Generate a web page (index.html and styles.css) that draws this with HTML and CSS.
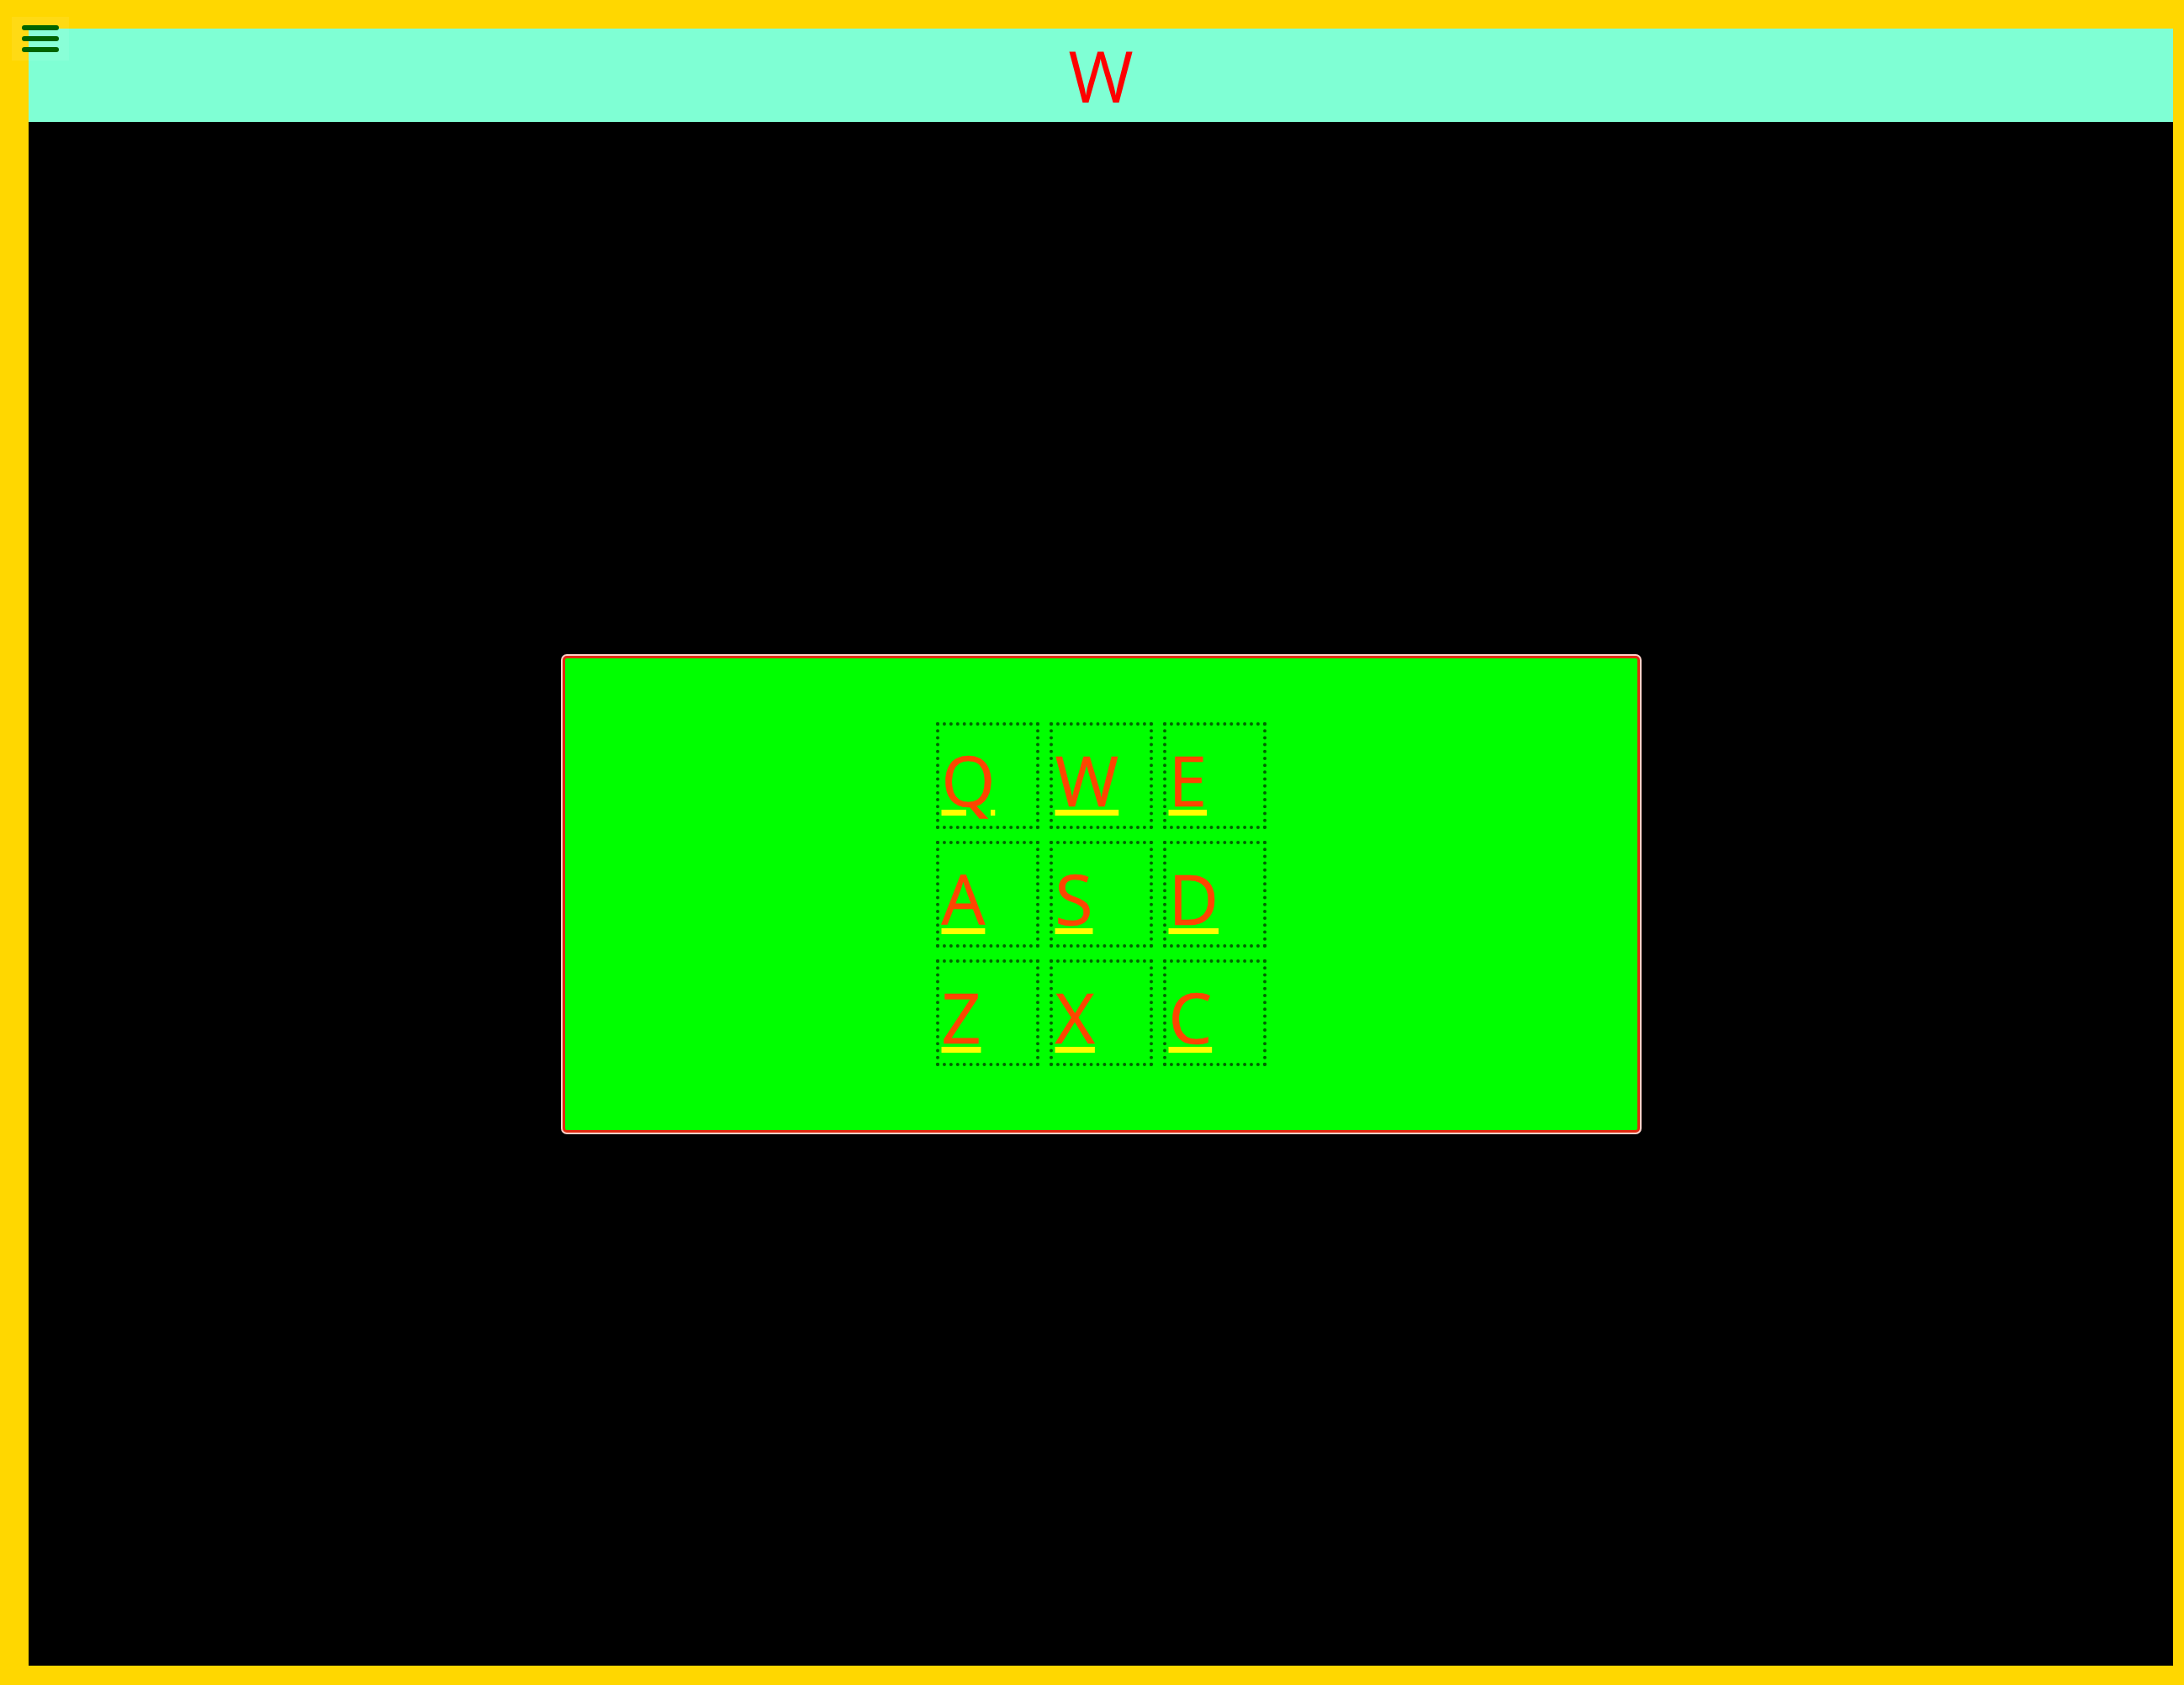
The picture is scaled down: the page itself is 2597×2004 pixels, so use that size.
FILE: index.html
```html
<!DOCTYPE html>
<html>
<head>
<meta charset="utf-8">
<title>W</title>
<link rel="stylesheet" href="styles.css">
</head>
<body>
<div class="page">
  <header class="topbar">
    <h1 class="title">W</h1>
  </header>
  <main class="stage">
    <section class="panel">
      <div class="keys">
        <a class="key" href="#"><span class="key-label">Q</span></a>
        <a class="key" href="#"><span class="key-label">W</span></a>
        <a class="key" href="#"><span class="key-label">E</span></a>
        <a class="key" href="#"><span class="key-label">A</span></a>
        <a class="key" href="#"><span class="key-label">S</span></a>
        <a class="key" href="#"><span class="key-label">D</span></a>
        <a class="key" href="#"><span class="key-label">Z</span></a>
        <a class="key" href="#"><span class="key-label">X</span></a>
        <a class="key" href="#"><span class="key-label">C</span></a>
      </div>
    </section>
  </main>
</div>
<button class="menu-btn" aria-label="Menu">
  <span class="menu-bar"></span>
  <span class="menu-bar"></span>
  <span class="menu-bar"></span>
</button>
</body>
</html>
```

FILE: styles.css
```css
html, body {
  margin: 0;
  padding: 0;
  height: 100%;
}

body {
  background: #ffd700;
  font-family: "Open Sans", "Noto Sans", "Liberation Sans", sans-serif;
  overflow: hidden;
}

.page {
  margin: 34px 13px 0 34px;
  height: calc(100vh - 57px);
  display: flex;
  flex-direction: column;
}

.topbar {
  height: 111px;
  background: #7fffd4;
  display: flex;
  justify-content: center;
  flex: none;
}

.title {
  margin: 0;
  font-weight: 400;
  font-size: 84px;
  line-height: 111px;
  color: #ff0000;
}

.stage {
  flex: 1;
  background: #000;
  display: flex;
  align-items: center;
  justify-content: center;
}

.panel {
  width: 50%;
  padding: 76px 0;
  background: #00ff00;
  border: 3px solid #e02a10;
  border-radius: 5px;
  box-shadow: 0 0 0 2px #ffd0c8;
  display: flex;
  justify-content: center;
}

.keys {
  display: grid;
  grid-template-columns: repeat(3, 123px);
  grid-auto-rows: 127px;
  column-gap: 12px;
  row-gap: 14px;
}

.key {
  box-sizing: border-box;
  border: 4px dotted #006400;
  padding: 9px 0 0 3px;
  color: #ff4500;
  font-size: 82px;
  line-height: 1.362;
  text-decoration: none;
  -webkit-text-stroke: 0.6px #ff4500;
}

.key-label {
  text-decoration: underline;
  text-decoration-color: #ffff00;
  text-decoration-thickness: 7px;
  text-underline-offset: 4px;
  text-decoration-skip-ink: auto;
}

.menu-btn {
  position: absolute;
  left: 14px;
  top: 20px;
  width: 68px;
  height: 52px;
  padding: 10px 12px;
  box-sizing: border-box;
  border: none;
  background: rgba(255, 255, 255, 0.08);
  display: flex;
  flex-direction: column;
  gap: 7px;
}

.menu-bar {
  display: block;
  width: 44px;
  height: 7px;
  border-radius: 4px;
  background: #006400;
}
```
